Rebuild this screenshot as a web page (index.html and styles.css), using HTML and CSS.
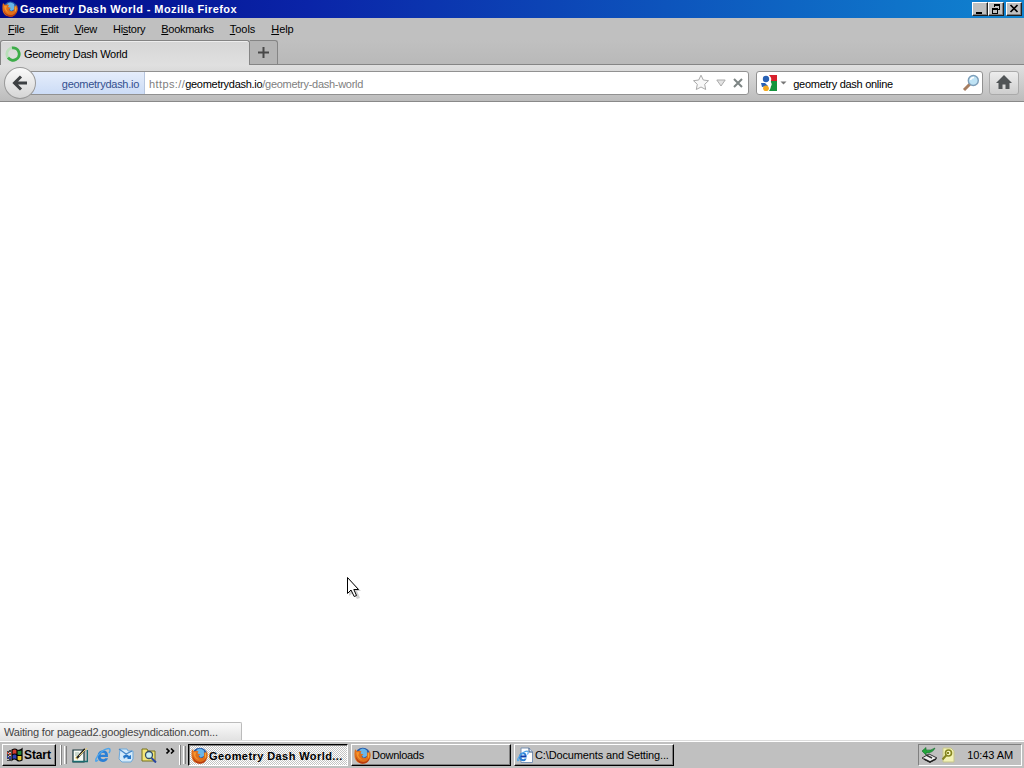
FILE: index.html
```html
<!DOCTYPE html>
<html lang="en">
  <head>
    <meta charset="utf-8">
    <title>Geometry Dash World - Mozilla Firefox</title>
    <link rel="stylesheet" href="styles.css">
  </head>
  <body>
    <svg class="defs" width="0" height="0">
      <symbol id="firefox" viewBox="0 0 16 16">
        <circle cx="8.3" cy="7.6" r="7" fill="#2458a8"/>
        <path d="M5 3Q8 0 12 3L13 8L9 10L6 6Z" fill="#69b6e8"/>
        <path d="M1 2L3 4Q5 3 7 4L6 6L9 7L7 8.5Q8 11 11 10Q13 9 12 5Q15 7 14.5 3Q17 8 14.5 12Q12 16 7.5 15.6Q2 15 .7 10Q0 5 1 2Z" fill="#e0701a"/>
        <path d="M1.5 8Q3 14 9 14Q13 14 15 9Q14 16 8 15.8Q2 15 1.500 8Z" fill="#b83c10"/>
        <path d="M13 4Q15.500 8 13 11Q14 7 13 4Z" fill="#fbc43c"/>
        <path d="M2 5L5 5L4 8Q5 11 8 12Q3 12 2 5Z" fill="#f7952c"/>
      </symbol>
      <symbol id="ie" viewBox="0 0 16 16">
        <path d="M13 10H5.500Q6 12.200 8.300 12.200Q9.700 12.200 10.200 11.200H13Q11.500 15 8 15Q2.500 14.500 2.500 9Q3 3.500 8 3.300Q13.500 3.500 13 10ZM5.600 7.700H10.200Q10 5.800 8 5.800Q6 5.800 5.600 7.700Z" fill="#2a7fd6"/>
        <path d="M3 13Q0 16 1 12Q3 7 9 3Q15 0 15 3Q15 4.500 14 6" fill="none" stroke="#4fa5ea" stroke-width="1.500"/>
      </symbol>
    </svg>

    <header class="titlebar">
      <svg class="icon" width="16" height="16"><use href="#firefox"/></svg>
      <h1>Geometry Dash World - Mozilla Firefox</h1>
      <div class="caption">
        <button><svg width="12" height="10"><path d="M2 8H8V10H2Z"/></svg></button>
        <button><svg width="12" height="10" shape-rendering="crispEdges"><path d="M4 0H10V6H8V5H9V2H5V3H4ZM2 4H8V10H2ZM3 6V9H7V6Z" fill-rule="evenodd"/></svg></button>
        <button class="close"><svg width="12" height="10"><path d="M2.500 1L9.500 8M9.500 1L2.500 8" stroke="#000" stroke-width="1.700"/></svg></button>
      </div>
    </header>

    <nav class="menubar">
      <a><u>F</u>ile</a>
      <a><u>E</u>dit</a>
      <a><u>V</u>iew</a>
      <a>Hi<u>s</u>tory</a>
      <a><u>B</u>ookmarks</a>
      <a><u>T</u>ools</a>
      <a><u>H</u>elp</a>
    </nav>

    <div class="tabs">
      <div class="tab">
        <svg width="16" height="16">
          <circle cx="8" cy="8" r="6.200" fill="none" stroke="#b9dfb9" stroke-width="2.800"/>
          <path d="M7 1.900A6.200 6.200 0 1 1 3 11.700" fill="none" stroke="#3dac49" stroke-width="2.800"/>
        </svg>
        <span>Geometry Dash World</span>
      </div>
      <div class="newtab"><svg width="11" height="11"><path d="M5.500 0V11M0 5.500H11" stroke="#484848" stroke-width="2"/></svg></div>
    </div>

    <div class="toolbar">
      <div class="back"><svg width="18" height="18"><path d="M10 2.500L3.500 9L10 15.500M4 9H16" fill="none" stroke="#3d4043" stroke-width="3"/></svg></div>
      <div class="urlbar">
        <span class="identity">geometrydash.io</span>
        <span class="url"><span class="scheme">https://</span><b>geometrydash.io</b>/geometry-dash-world</span>
        <svg class="star" width="18" height="17"><path d="M9 1.200L11.300 6L16.500 6.700L12.700 10.300L13.700 15.500L9 13L4.300 15.500L5.300 10.300L1.500 6.700L6.700 6Z" fill="#f8f8f8" stroke="#aaa"/></svg>
        <svg class="drop" width="10" height="8"><path d="M.8 1H9.200L5 7Z" fill="#e4e4e4" stroke="#aaa"/></svg>
        <svg class="stop" width="10" height="10"><path d="M1 1L9 9M9 1L1 9" stroke="#7d8584" stroke-width="2"/></svg>
      </div>
      <div class="search">
        <svg class="google" width="16" height="16">
          <path d="M8 0H16V6H10Z" fill="#d8202c"/>
          <path d="M10 6H16V16H8Q11 12 9 9Z" fill="#15943d"/>
          <circle cx="5" cy="4" r="3.200" fill="#2861b5"/>
          <path d="M0 8L4 8L7 11L1 12Z" fill="#2861b5"/>
          <circle cx="5" cy="13.300" r="2.900" fill="#f4a81d"/>
          <path d="M8 1Q11 5 8 7Q12 9 8 12" fill="none" stroke="#fff" stroke-width="1.500"/>
        </svg>
        <svg class="engines" width="7" height="4"><path d="M.5 .5H6.500L3.500 3.500Z" fill="#777"/></svg>
        <span>geometry dash online</span>
        <svg class="glass" width="18" height="18">
          <path d="M2 16L8 10" stroke="#a77e61" stroke-width="3"/>
          <circle cx="11.300" cy="6.500" r="5" fill="#bfe3f5" stroke="#7d9eb9" stroke-width="1.400"/>
          <path d="M8.500 6Q9 3.500 12 3.500" fill="none" stroke="#fff" stroke-width="1.400"/>
        </svg>
      </div>
      <div class="home"><svg width="16" height="15"><path d="M8 0L16 8H13.500V14H9.500V9.500H6.500V14H2.500V8H0Z" fill="#505456"/></svg></div>
    </div>

    <main class="page">
      <div class="status">Waiting for pagead2.googlesyndication.com...</div>
      <svg class="cursor" width="18" height="26">
        <path d="M3 3L15 15H11L14 22L11 23L7 17L3 20Z" fill="#000" opacity=".18"/>
        <path d="M1.500 1.500V17.500L5 14L8.200 20.500L10.500 19.500L7.800 13.500H12.500Z" fill="#fff" stroke="#000"/>
      </svg>
    </main>

    <footer class="taskbar">
      <div class="start">
        <svg width="17" height="16">
          <path d="M6 3Q9 1 11 3V8Q8 6 6 8Z" fill="#d33c2c"/>
          <path d="M11 3Q14 4 16 2V8Q13 9 11 8Z" fill="#2a8b3c"/>
          <path d="M6 8Q9 6 11 8V13Q8 11 6 13Z" fill="#2d3fb5"/>
          <path d="M11 8Q14 9 16 8V13Q13 15 11 13Z" fill="#e7c52c"/>
          <path d="M6 3Q9 1 11 3Q14 4 16 2V13Q13 15 11 13Q8 11 6 13ZM11 3V13M6 8Q9 6 11 8Q14 9 16 8" fill="none" stroke="#000" stroke-width="1.200"/>
          <path d="M4 3V14M2 4V14" stroke="#000" stroke-width="1.300" stroke-dasharray="2 1"/>
          <path d="M3 7H5M1 6H2" stroke="#d33c2c" stroke-width="2"/>
          <path d="M3 11H5M1 10H2" stroke="#2d3fb5" stroke-width="2"/>
        </svg>
        <span>Start</span>
      </div>
      <i class="grip"></i><i class="grip thick"></i>
      <div class="quick">
        <svg width="16" height="16">
          <path d="M1 3H12V15H1Z" fill="#f7fbf4" stroke="#16353b" stroke-width="1.200"/>
          <path d="M.5 14.500H15.500V3" fill="none" stroke="#1b6c70" stroke-width="1.600"/>
          <path d="M3 11L6 13L5 9Z" fill="#e7c95d"/>
          <path d="M5 11L13 2" stroke="#222" stroke-width="2"/>
          <path d="M7 9L15 1" stroke="#e5cb6a"/>
          <path d="M3 6H7M3 8H6" stroke="#9db8a9"/>
        </svg>
        <svg width="16" height="16"><use href="#ie"/></svg>
        <svg width="16" height="16">
          <path d="M2 2H9L10 4H15V12L13 15H4L1 12Z" fill="#d4eafa" stroke="#6da8da"/>
          <path d="M1 2L8 7L14 4" fill="none" stroke="#4587c9" stroke-width="1.300"/>
          <path d="M5 9Q9 6 11 9L13 8V12H9L10 11Q8 9 6 12Z" fill="#2677c9"/>
        </svg>
        <svg width="16" height="16">
          <path d="M1 2H6L7 4H14V14H1Z" fill="#f4e678" stroke="#75701d"/>
          <circle cx="8" cy="8" r="3.500" fill="#c9f0f5" stroke="#354c62" stroke-width="1.300"/>
          <path d="M10.500 11L15 15.500" stroke="#2846a4" stroke-width="2"/>
        </svg>
      </div>
      <svg class="more" width="9" height="6"><path d="M.5 .5L3 3L.5 5.500M5 .5L7.500 3L5 5.500" fill="none" stroke="#000" stroke-width="1.600"/></svg>
      <i class="grip"></i><i class="grip thick"></i>
      <div class="task active"><svg width="17" height="17"><use href="#firefox"/></svg><span>Geometry Dash World...</span></div>
      <div class="task"><svg width="17" height="17"><use href="#firefox"/></svg><span>Downloads</span></div>
      <div class="task doc">
        <svg width="17" height="17">
          <path d="M4 1H12L15.500 4.500V15.500H4Z" fill="#fff" stroke="#7992b3"/>
          <path d="M12 1V5H15.500" fill="#dce9f8" stroke="#35527c"/>
          <g transform="translate(0 3) scale(.75)"><use href="#ie" width="16" height="16"/><path d="M5 8.500H12" stroke="#173aa4" stroke-width="2"/></g>
        </svg>
        <span>C:\Documents and Setting...</span>
      </div>
      <div class="tray">
        <svg width="17" height="16">
          <path d="M1 11L8 7L16 11L9 15.500Z" fill="#eee" stroke="#333"/>
          <path d="M3 12L9 15L15 12" fill="none" stroke="#222" stroke-width="1.500"/>
          <path d="M5 8L11 11" stroke="#333" stroke-width="1.500"/>
          <path d="M1 4L5 .5V3Q10 4 14 1Q12 6 5 6V8Z" fill="#22a63a" stroke="#11682a" stroke-width=".6"/>
        </svg>
        <svg width="14" height="16">
          <path d="M2 1H10L13 4V15H2Z" fill="#f2f2b4" stroke="#c6c58b"/>
          <circle cx="7.500" cy="6" r="3" fill="#f6f5bd" stroke="#84851f" stroke-width="1.600"/>
          <path d="M5.500 8L1.500 12.500M7 7V5" stroke="#84851f" stroke-width="2"/>
        </svg>
        <time>10:43 AM</time>
      </div>
    </footer>
  </body>
</html>
```

FILE: styles.css
```css
* {
    box-sizing: border-box;
}

body {
    margin: 0;
    width: 1024px;
    height: 768px;
    overflow: hidden;
    display: flex;
    flex-direction: column;
    background: #c0c0c0;
    color: #000;
    font: 11px/14px "Liberation Sans", Arial, sans-serif;
    letter-spacing: -0.28px;
    white-space: nowrap;
    cursor: default;
}

svg {
    display: block;
    flex: none;
}

.defs {
    position: absolute;
}

.titlebar {
    display: flex;
    align-items: center;
    height: 18px;
    padding: 0 2px;
    background: linear-gradient(90deg, #000a86, #0a24a8 30%, #1084d0);
    color: #fff;
}

.titlebar h1 {
    flex: 1;
    margin: 0 0 0 2px;
    font-size: 11px;
    letter-spacing: 0.42px;
}

.caption {
    display: flex;
}

.caption button {
    width: 16px;
    height: 14px;
    padding: 1px;
    background: #c0c0c0;
    border: 1px solid;
    border-color: #fff #202020 #202020 #fff;
    box-shadow: inset -1px -1px #808080;
}

.caption .close {
    margin-left: 2px;
}

.menubar {
    display: flex;
    gap: 16px;
    height: 22px;
    padding: 4px 8px 0;
}

.menubar a:nth-child(n+6) {
    letter-spacing: -0.05px;
}

.menubar u {
    text-underline-offset: 1px;
}

.tabs {
    display: flex;
    height: 25px;
    background: linear-gradient(#c0c0c0, #b9b9b9);
    border-bottom: 1px solid #858585;
}

.tab {
    display: flex;
    align-items: center;
    gap: 3px;
    width: 250px;
    height: 26px;
    margin-bottom: -2px;
    padding-left: 4px;
    background: linear-gradient(#d6d6d6, #e0e0e0);
    border: 1px solid #858585;
    border-bottom: 0;
    border-radius: 3px 3px 0 0;
    box-shadow: inset 0 1px #eee;
}

.newtab {
    display: flex;
    align-items: center;
    justify-content: center;
    width: 28px;
    background: #b4b4b4;
    border: 1px solid #858585;
    border-width: 1px 1px 0 0;
    border-radius: 0 3px 0 0;
}

.toolbar {
    display: flex;
    align-items: center;
    height: 37px;
    padding: 0 5px 1px 4px;
    background: linear-gradient(#e0e0e0, #bcbcbc);
    border-bottom: 1px solid #898989;
}

.back {
    z-index: 1;
    display: flex;
    align-items: center;
    justify-content: center;
    width: 32px;
    height: 32px;
    margin-right: -16px;
    background: linear-gradient(#fafafa, #d5d5d5);
    border: 1px solid #999;
    border-radius: 50%;
}

.urlbar, .search {
    display: flex;
    align-items: center;
    height: 24px;
    background: #fff;
    border: 1px solid #919191;
    border-radius: 3px;
}

.urlbar {
    width: 730px;
    padding-right: 5px;
}

.identity {
    width: 124px;
    height: 22px;
    padding-right: 5px;
    line-height: 24px;
    text-align: right;
    color: #34508f;
    background: linear-gradient(#e5edfb, #ccdcf6);
    border-right: 1px solid #b7c6df;
}

.url {
    flex: 1;
    padding: 2px 0 0 4px;
    color: #808080;
}

.url b {
    font-weight: normal;
    color: #000;
}

.url .scheme {
    letter-spacing: 0.4px;
}

.drop {
    margin: 0 7px 0 6px;
}

.search {
    width: 227px;
    margin-left: 7px;
    padding: 0 2px 0 4px;
}

.engines {
    margin: 0 6px 0 3px;
}

.search span {
    flex: 1;
    padding-top: 2px;
}

.home {
    display: flex;
    align-items: center;
    justify-content: center;
    width: 30px;
    height: 24px;
    margin-left: 6px;
    background: linear-gradient(#ededed, #cecece);
    border: 1px solid #aaa;
    border-radius: 3px;
}

.page {
    flex: 1;
    display: flex;
    align-items: flex-end;
    position: relative;
    background: #fff;
}

.status {
    width: 242px;
    height: 18px;
    padding: 2px 4px;
    color: #444;
    letter-spacing: -0.19px;
    background: linear-gradient(#fafafa, #e2e2e2);
    border: 1px solid #bbb;
    border-width: 1px 1px 0 0;
    border-radius: 0 2px 0 0;
}

.cursor {
    position: absolute;
    left: 346px;
    top: 474px;
}

.taskbar {
    display: flex;
    align-items: center;
    height: 28px;
    padding: 1px 2px 0;
    border-top: 1px solid #dcdcdc;
    box-shadow: inset 0 1px #fff;
}

.start, .task {
    display: flex;
    align-items: center;
    height: 22px;
    background: #c0c0c0;
    border: 1px solid;
    border-color: #fff #000 #000 #fff;
    box-shadow: inset -1px -1px #808080;
}

.start {
    width: 54px;
    padding-left: 3px;
    gap: 1px;
    font-weight: bold;
    font-size: 12px;
    letter-spacing: -0.1px;
    margin-right: 4px;
}

.grip {
    width: 2px;
    height: 20px;
    margin-right: 2px;
    border-left: 1px solid #fff;
    border-right: 1px solid #808080;
}

.thick {
    width: 3px;
    height: 18px;
    background: #c0c0c0;
}

.quick {
    display: flex;
    gap: 7px;
    margin: 0 9px 0 3px;
}

.more {
    margin: -8px 4px 0 0;
}

.task {
    width: 160px;
    margin-right: 3px;
    padding-left: 2px;
    gap: 1px;
}

.active {
    padding-top: 1px;
    font-weight: bold;
    letter-spacing: 0.42px;
    background: repeating-conic-gradient(#fff 0 25%, #c4c4c4 0 50%) 0 0 / 2px 2px;
    border-color: #000 #fff #fff #000;
    box-shadow: inset 1px 1px #808080;
}

.doc {
    letter-spacing: -0.14px;
}

.tray {
    display: flex;
    align-items: center;
    gap: 3px;
    width: 104px;
    height: 22px;
    margin-left: auto;
    padding: 0 8px 0 2px;
    border: 1px solid;
    border-color: #808080 #fff #fff #808080;
}

.tray time {
    margin-left: auto;
    letter-spacing: -0.1px;
}
```
